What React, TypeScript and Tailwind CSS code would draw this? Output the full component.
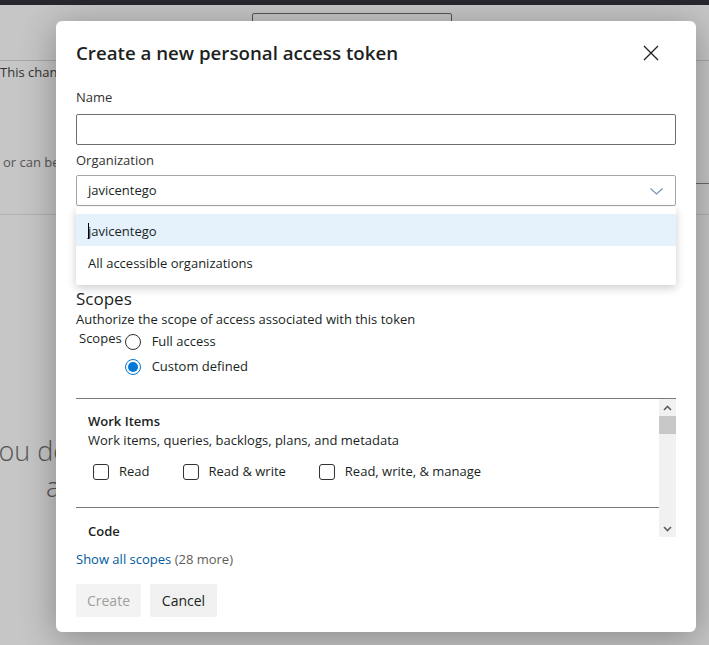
import React from "react";

const font = "font-['Open_Sans','Noto_Sans',sans-serif]";

function CloseIcon() {
  return (
    <svg width="16" height="16" viewBox="0 0 16 16" fill="none">
      <path d="M1 1L15 15M15 1L1 15" stroke="#201f1e" strokeWidth="1.3" />
    </svg>
  );
}

function Chevron({ color = "#7590b0" }: { color?: string }) {
  return (
    <svg width="13" height="7" viewBox="0 0 13 7" fill="none">
      <path d="M0.5 0.5L6.5 6L12.5 0.5" stroke={color} strokeWidth="1.1" />
    </svg>
  );
}

function Radio({ checked, label }: { checked?: boolean; label: string }) {
  return (
    <label className="flex h-[25px] items-center gap-[11px]">
      {checked ? (
        <span className="flex h-[16px] w-[16px] items-center justify-center rounded-full border border-[#0078d4]">
          <span className="h-[10px] w-[10px] rounded-full bg-[#0078d4]" />
        </span>
      ) : (
        <span className="h-[16px] w-[16px] rounded-full border border-[#323130]" />
      )}
      <span>{label}</span>
    </label>
  );
}

function Check({ label }: { label: string }) {
  return (
    <label className="flex items-center gap-[10px]">
      <span className="h-[16px] w-[16px] rounded-[3px] border border-[#323130]" />
      <span>{label}</span>
    </label>
  );
}

export default function App() {
  return (
    <div className={`${font} relative h-[645px] w-[709px] overflow-hidden bg-[#c6c6c6] text-[13px] text-[#201f1e]`}>
      {/* page behind the overlay */}
      <div className="h-[5px] bg-[#28262f]" />
      <div className="relative h-[48px] border-b border-[#a8a8a8]">
        <div className="ml-[252px] mt-[8px] h-[30px] w-[200px] rounded-[2px] border border-[#555]" />
        <div className="absolute left-[666px] top-[8px] flex h-[26px] w-[26px] justify-center rounded-full bg-[#b8b8b8]">
          <span className="mt-[6px] h-[8px] w-[5px] bg-[#9b6bbf]" />
        </div>
      </div>
      <div className="mt-[1px] leading-[20px] text-[#333]">This change applies to all tokens in the organization</div>
      <div className="ml-[3px] mt-[70px] leading-[20px] text-[#555]">or can be revoked at any time</div>
      <div className="mt-[42px] border-t border-[#b0b0b0]" />
      <div className="ml-[-14px] mt-[218px] text-[27px] font-light leading-[36px] text-[#555]">you don't have any</div>
      <div className="ml-[46px] text-[27px] font-light leading-[36px] text-[#555]">a</div>
      <div className="absolute left-[696px] top-[183px] w-[13px] border-t border-[#6a6a6a]" />

      {/* dialog */}
      <div className="absolute left-[56px] top-[21px] h-[611px] w-[640px] rounded-[6px] bg-white px-[20px] shadow-[0_6px_36px_rgba(0,0,0,0.32)]">
        <div className="mt-[18px] flex h-[28px] items-center justify-between">
          <h1 className="text-[18.7px] font-semibold leading-[28px] text-[#201f1e]">Create a new personal access token</h1>
          <button className="mr-[9px] flex h-[32px] w-[32px] items-center justify-center">
            <CloseIcon />
          </button>
        </div>

        <div className="mt-[20px] h-[20px] leading-[20px] text-[#323130]">Name</div>
        <div className="mt-[7px] h-[31px] rounded-[2px] border border-[#6e6e6e]" />

        <div className="mt-[5px] h-[20px] leading-[20px] text-[#323130]">Organization</div>
        <div className="mt-[5px] flex h-[31px] items-center justify-between rounded-[2px] border border-[#a6a6a6] pl-[11px] pr-[12px] pt-[1px]">
          <span>javicentego</span>
          <Chevron />
        </div>

        <div className="mt-[8px] h-[20px] leading-[20px] text-[#323130]">Expiration (UTC)</div>
        <div className="mt-[5px] h-[31px] w-[200px] rounded-[2px] border border-[#a6a6a6]" />

        <div className="mt-[18px] text-[17px] leading-[22px]">Scopes</div>
        <div className="leading-[19px]">Authorize the scope of access associated with this token</div>
        <div className="flex">
          <span className="ml-[3px] mr-[3px] mt-[-1px] leading-[20px]">Scopes</span>
          <div className="flex flex-col">
            <Radio label="Full access" />
            <Radio checked label="Custom defined" />
          </div>
        </div>

        <div className="mt-[19px] flex h-[139px] border-t border-[#7a7a7a]">
          <div className="flex-1 overflow-hidden">
            <div className="border-b border-[#7a7a7a] pb-[23px] pl-[12px] pt-[12px]">
              <div className="font-semibold leading-[20px]">Work Items</div>
              <div className="leading-[19px]">Work items, queries, backlogs, plans, and metadata</div>
              <div className="ml-[5px] mt-[10px] flex h-[24px] items-center gap-[33px]">
                <Check label="Read" />
                <Check label="Read & write" />
                <Check label="Read, write, & manage" />
              </div>
            </div>
            <div className="pl-[12px] pt-[13px]">
              <div className="font-semibold leading-[20px]">Code</div>
            </div>
          </div>
          <div className="flex w-[17px] flex-col items-center bg-[#f1f1f1]">
            <div className="flex h-[17px] w-full items-center justify-center">
              <svg width="9" height="6" viewBox="0 0 9 6" fill="none">
                <path d="M1 5L4.5 1.5L8 5" stroke="#606060" strokeWidth="1.6" />
              </svg>
            </div>
            <div className="h-[18px] w-full bg-[#c8c8c8]" />
            <div className="flex-1" />
            <div className="flex h-[17px] w-full items-center justify-center">
              <svg width="9" height="6" viewBox="0 0 9 6" fill="none">
                <path d="M1 1L4.5 4.5L8 1" stroke="#606060" strokeWidth="1.6" />
              </svg>
            </div>
          </div>
        </div>

        <div className="mt-[12px] leading-[20px]">
          <a className="text-[#005a9e]">Show all scopes</a> <span className="text-[#605e5c]">(28 more)</span>
        </div>

        <div className="mt-[15px] flex gap-[9px]">
          <button className="h-[33px] w-[65px] rounded-[2px] bg-[#f3f3f3] text-[14px] text-[#a19f9d]">Create</button>
          <button className="h-[33px] w-[67px] rounded-[2px] bg-[#f0f0f0] text-[14px] text-[#201f1e]">Cancel</button>
        </div>

        {/* open organization dropdown */}
        <div className="absolute left-[20px] right-[20px] top-[186px] rounded-[2px] bg-white py-[7px] shadow-[0_3px_10px_rgba(0,0,0,0.2)]">
          <div className="relative flex h-[32px] items-center bg-[#e5f1fb] pl-[12px] pt-[3px]">
            <span className="absolute left-[12px] top-[9px] h-[16px] w-[1px] bg-black" />
            <span>javicentego</span>
          </div>
          <div className="flex h-[32px] items-center pl-[12px] pt-[3px]">All accessible organizations</div>
        </div>
      </div>
    </div>
  );
}
